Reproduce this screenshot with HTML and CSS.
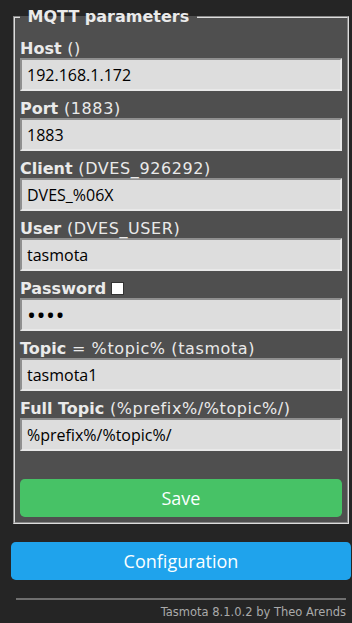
FILE: index.html
```html
<!DOCTYPE html>
<html lang="en">
<head>
    <meta charset="UTF-8">
    <meta name="viewport" content="width=device-width, initial-scale=1.0">
    <title>Tasmota - Configure MQTT</title>
    <link rel="stylesheet" href="styles.css">
</head>
<body>
    <div class="main">
        <fieldset class="panel">
            <legend>&nbsp;MQTT parameters&nbsp;</legend>
            <form>
                <p class="field">
                    <label class="label" for="mh"><b>Host</b> ()</label>
                    <input class="input" id="mh" value="192.168.1.172">
                </p>
                <p class="field">
                    <label class="label" for="ml"><b>Port</b> (1883)</label>
                    <input class="input" id="ml" value="1883">
                </p>
                <p class="field">
                    <label class="label" for="mc"><b>Client</b> (DVES_926292)</label>
                    <input class="input" id="mc" value="DVES_%06X">
                </p>
                <p class="field">
                    <label class="label" for="mu"><b>User</b> (DVES_USER)</label>
                    <input class="input" id="mu" value="tasmota">
                </p>
                <p class="field">
                    <span class="label"><b>Password</b><input class="show" type="checkbox"></span>
                    <input class="input input-pass" id="mp" type="password" value="****">
                </p>
                <p class="field">
                    <label class="label" for="mt"><b>Topic</b> = %topic% (tasmota)</label>
                    <input class="input" id="mt" value="tasmota1">
                </p>
                <p class="field">
                    <label class="label" for="mf"><b>Full Topic</b> (%prefix%/%topic%/)</label>
                    <input class="input" id="mf" value="%prefix%/%topic%/">
                </p>
                <button class="btn btn-save" type="button">Save</button>
            </form>
        </fieldset>
        <button class="btn btn-config" type="button">Configuration</button>
        <div class="footer">
            <hr>
            <span class="credit">Tasmota 8.1.0.2 by Theo Arends</span>
        </div>
    </div>
</body>
</html>
```

FILE: styles.css
```css
body {
    margin: 0;
    background: #252525;
    color: #eaeaea;
    font-family: "DejaVu Sans", Verdana, sans-serif;
    font-size: 16px;
}
.main {
    width: 340px;
    margin-left: 11px;
    padding-top: 7px;
}
.panel {
    margin: 0 2px;
    padding: 5px;
    border: 2px groove #dddddd;
    background: #4f4f4f;
}
.panel legend {
    padding: 0 2px;
    font-weight: bold;
    line-height: 19px;
}
form {
    margin: 0;
}
.field {
    margin: 8px 0;
}
.label {
    display: block;
    line-height: 19px;
    letter-spacing: 0.6px;
}
.label b {
    letter-spacing: 0;
}
.show {
    appearance: none;
    -webkit-appearance: none;
    width: 13px;
    height: 13px;
    margin: 0 0 0 5px;
    vertical-align: -1px;
    box-sizing: border-box;
    border: 1px solid #333;
    background: #fff;
}
.input {
    display: block;
    width: 100%;
    height: 33px;
    box-sizing: border-box;
    margin: 0;
    padding: 5px;
    border: 2px solid;
    border-color: #8f8f8f #e8e8e8 #e8e8e8 #8f8f8f;
    background: #dddddd;
    color: #000;
    font-family: "Open Sans", sans-serif;
    font-size: 16px;
}
.input-pass {
    padding: 0 5px;
    font-size: 24px;
    letter-spacing: 0.5px;
}
.btn {
    display: block;
    width: 100%;
    height: 38px;
    border: 0;
    border-radius: 0.3rem;
    background: #1fa3ec;
    color: #faffff;
    font-family: "Open Sans", sans-serif;
    font-size: 18px;
    cursor: pointer;
}
.btn-save {
    margin-top: 28px;
    background: #47c266;
}
.btn-config {
    margin-top: 18px;
}
.footer {
    padding: 0 5px;
    text-align: right;
    font-size: 11.5px;
    line-height: 13px;
}
.footer hr {
    margin: 18px 0 6px;
    height: 0;
    border: 0;
    border-top: 2px solid #6f6f6f;
}
.credit {
    color: #aaaaaa;
}
```
